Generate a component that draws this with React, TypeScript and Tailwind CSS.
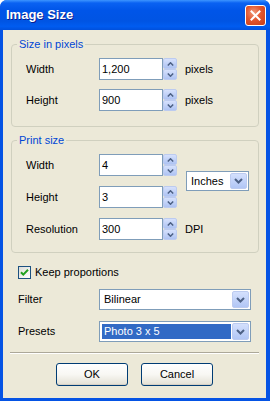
import React from 'react';

function Chevron({ up = false, size = 'sm' }: { up?: boolean; size?: 'sm' | 'lg' }) {
  if (size === 'lg') {
    return (
      <svg width="9" height="6" viewBox="0 0 9 6">
        <path d="M1 1 L4.5 4.5 L8 1" stroke="#4d6185" strokeWidth="2" fill="none" />
      </svg>
    );
  }
  return (
    <svg width="7" height="4" viewBox="0 0 7 4">
      <path
        d={up ? 'M0.8 3.5 L3.5 0.8 L6.2 3.5' : 'M0.8 0.5 L3.5 3.2 L6.2 0.5'}
        stroke="#4d6185"
        strokeWidth="1.5"
        fill="none"
      />
    </svg>
  );
}

function Spinner() {
  return (
    <div className="flex flex-col h-full w-[14px]">
      <div className="flex-1 flex items-center justify-center rounded-[2px] border border-[#bccbf0] bg-linear-to-b from-[#d6e1fc] to-[#aec3f3]">
        <Chevron up />
      </div>
      <div className="flex-1 flex items-center justify-center rounded-[2px] border border-[#bccbf0] bg-linear-to-b from-[#d6e1fc] to-[#aec3f3]">
        <Chevron />
      </div>
    </div>
  );
}

function Input({ value }: { value: string }) {
  return (
    <div className="h-full w-[64px] border border-[#7f9db9] bg-white flex items-center pl-[2px] text-[11px] text-black">
      {value}
    </div>
  );
}

function DropButton() {
  return (
    <div className="w-[17px] h-full flex items-center justify-center rounded-[2px] border border-[#bccbf0] bg-linear-to-b from-[#d4e0fd] to-[#b1c6f5]">
      <Chevron size="lg" />
    </div>
  );
}

function Combo({ value, className, selected = false }: { value: string; className: string; selected?: boolean }) {
  return (
    <div className={`border border-[#7f9db9] bg-white flex items-stretch p-[1px] ${className}`}>
      <div className="flex-1 flex items-center pl-[1px] pr-[1px] py-[1px]">
        <div
          className={`w-full h-full flex items-center pl-[2px] text-[11px] ${
            selected ? 'bg-[#316ac5] text-white' : 'text-black'
          }`}
        >
          {value}
        </div>
      </div>
      <DropButton />
    </div>
  );
}

function Row({ label, value, unit }: { label: string; value: string; unit?: string }) {
  return (
    <>
      <div className="flex items-center text-[11px] text-black">{label}</div>
      <Input value={value} />
      <Spinner />
      {unit ? <div className="flex items-center pl-[8px] text-[11px] text-black">{unit}</div> : null}
    </>
  );
}

export default function App() {
  return (
    <div className="w-[270px] h-[401px] flex flex-col bg-[#0553e4] rounded-t-[7px] overflow-hidden font-['Liberation_Sans',Arial,sans-serif] select-none">
      {/* Title bar */}
      <div className="h-[30px] shrink-0 flex items-center justify-between pl-[6px] pr-[4px] bg-[linear-gradient(to_bottom,#3d95ff_0%,#0a62f2_10%,#0055e8_35%,#0054e3_70%,#005cf0_88%,#0050dc_100%)]">
        <span className="text-white font-bold text-[13px] leading-none pb-[1px] [text-shadow:1px_1px_0_#0a1f8f]">
          Image Size
        </span>
        <div className="w-[21px] h-[21px] rounded-[3px] border border-white bg-[radial-gradient(circle_at_40%_35%,#f09a7c_0%,#e2562e_45%,#c83d17_100%)] flex items-center justify-center">
          <svg width="11" height="11" viewBox="0 0 11 11">
            <path d="M1.5 1.5 L9.5 9.5 M9.5 1.5 L1.5 9.5" stroke="white" strokeWidth="2" strokeLinecap="square" />
          </svg>
        </div>
      </div>

      {/* Content */}
      <div className="flex-1 ml-[3px] mr-[4px] mb-[3px] bg-[#ece9d8] pl-[8px] pr-[7px] pt-[8px] flex flex-col">
        {/* Size in pixels */}
        <fieldset className="border border-[#d0d0bf] rounded-[4px] px-0 pt-[7px] pb-[15px] m-0">
          <legend className="ml-[5px] px-[2px] text-[11px] leading-[13px] text-[#0046d5]">Size in pixels</legend>
          <div className="pl-[14px] grid grid-cols-[73px_64px_14px_1fr] auto-rows-[22px] gap-y-[9px]">
            <Row label="Width" value="1,200" unit="pixels" />
            <Row label="Height" value="900" unit="pixels" />
          </div>
        </fieldset>

        {/* Print size */}
        <fieldset className="mt-[7px] border border-[#d0d0bf] rounded-[4px] px-0 pt-[7px] pb-[12px] m-0">
          <legend className="ml-[5px] px-[2px] text-[11px] leading-[13px] text-[#0046d5]">Print size</legend>
          <div className="pl-[14px] grid grid-cols-[73px_64px_14px_1fr] auto-rows-[22px] gap-y-[10px]">
            <div className="flex items-center text-[11px] text-black">Width</div>
            <Input value="4" />
            <Spinner />
            <div className="row-span-2 flex items-center pl-[9px]">
              <Combo value="Inches" className="w-[63px] h-[20px]" />
            </div>
            <div className="flex items-center text-[11px] text-black">Height</div>
            <Input value="3" />
            <Spinner />
            <Row label="Resolution" value="300" unit="DPI" />
          </div>
        </fieldset>

        {/* Keep proportions */}
        <div className="mt-[13px] ml-[7px] flex items-center h-[13px]">
          <div className="w-[13px] h-[13px] border border-[#1c5180] bg-linear-to-br from-[#dcdcd7] to-white flex items-center justify-center">
            <svg width="9" height="9" viewBox="0 0 9 9">
              <path d="M1 4.2 L3.3 6.6 L8 1.8" stroke="#21a121" strokeWidth="2" fill="none" />
            </svg>
          </div>
          <span className="ml-[4px] text-[11px] text-black">Keep proportions</span>
        </div>

        {/* Filter */}
        <div className="mt-[10px] ml-[7px] flex items-center h-[21px]">
          <span className="w-[81px] text-[11px] text-black">Filter</span>
          <Combo value="Bilinear" className="w-[152px] h-[21px]" />
        </div>

        {/* Presets */}
        <div className="mt-[11px] ml-[7px] flex items-center h-[21px]">
          <span className="w-[81px] text-[11px] text-black">Presets</span>
          <Combo value="Photo 3 x 5" className="w-[152px] h-[21px]" selected />
        </div>

        {/* Separator */}
        <div className="mt-[10px] -ml-[1px] h-[2px] border-t border-[#aca899] border-b border-b-white" />

        {/* Buttons */}
        <div className="mt-[9px] flex justify-center gap-[13px] pr-[1px]">
          <button className="w-[72px] h-[23px] rounded-[3px] border border-[#003c74] bg-linear-to-b from-white via-[#f8f7f3] to-[#e3e0d4] text-[11px] text-black shadow-[inset_0_-1px_0_#d6d0c5]">
            OK
          </button>
          <button className="w-[72px] h-[23px] rounded-[3px] border border-[#003c74] bg-linear-to-b from-white via-[#f8f7f3] to-[#e3e0d4] text-[11px] text-black shadow-[inset_0_-1px_0_#d6d0c5]">
            Cancel
          </button>
        </div>
      </div>
    </div>
  );
}
